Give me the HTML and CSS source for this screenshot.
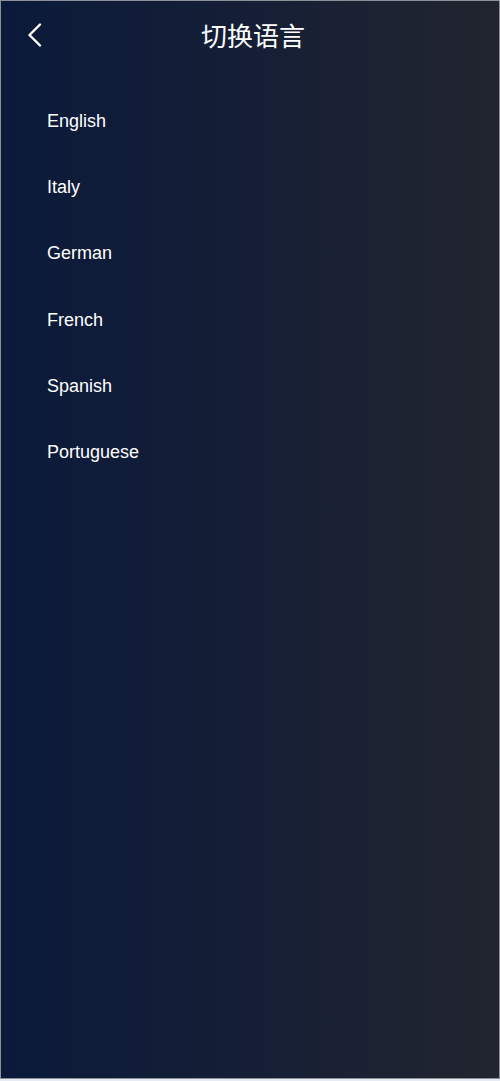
FILE: index.html
```html
<!DOCTYPE html>
<html lang="zh">
<head>
<meta charset="utf-8">
<title>切换语言</title>
<link rel="stylesheet" href="styles.css">
</head>
<body>
<div class="app">
  <header class="header">
    <span class="back">
      <svg width="16" height="24" viewBox="0 0 16 24"><path d="M13 1.5 L2.5 12 L13 22.5" fill="none" stroke="#fff" stroke-width="2.4" stroke-linecap="round" stroke-linejoin="round"/></svg>
    </span>
    <h1 class="title">切换语言</h1>
  </header>
  <ul class="langs">
    <li>English</li>
    <li>Italy</li>
    <li>German</li>
    <li>French</li>
    <li>Spanish</li>
    <li>Portuguese</li>
  </ul>
</div>
</body>
</html>
```
FILE: styles.css
```css
html, body { margin: 0; padding: 0; }
body {
  background: #e8edf4;
  font-family: "Liberation Sans", Arial, "Noto Sans CJK SC", sans-serif;
  color: #fff;
}
.app {
  box-sizing: border-box;
  width: 500px;
  height: 1079px;
  border: 1px solid #8c9099;
  background: linear-gradient(to right, #0b1a3b 0%, #141e36 45%, #22252f 100%);
}
.header {
  position: relative;
  height: 71px;
  display: flex;
  align-items: center;
  justify-content: center;
}
.back {
  position: absolute;
  left: 26px;
  top: 22px;
  display: flex;
}
.title {
  margin: 0;
  font-family: "Noto Sans CJK SC", sans-serif;
  font-weight: 400;
  font-size: 26px;
  line-height: 1;
  transform: translate(3px, -2px);
}
.langs {
  list-style: none;
  margin: 0;
  padding: 16px 0 0 46px;
}
.langs li {
  height: 66.3px;
  display: flex;
  align-items: center;
  font-size: 18px;
}
```
